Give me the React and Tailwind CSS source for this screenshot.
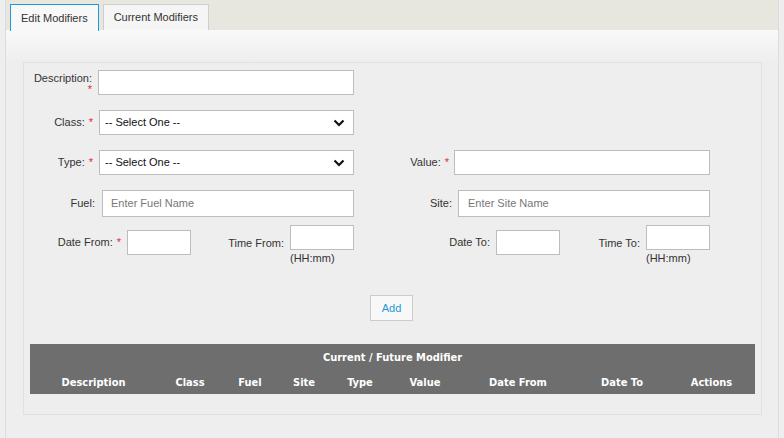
import React from "react";

const lbl = "text-[11px] text-[#333] leading-none";
const inp = "h-[25px] bg-white border border-[#bdbdbd]";

function Chevron() {
  return (
    <svg width="12" height="8" viewBox="0 0 12 8" className="absolute right-[8px] top-[8px]">
      <path d="M1.5 1.5 L6 6 L10.5 1.5" fill="none" stroke="#111" strokeWidth="2.2" />
    </svg>
  );
}

function Select({ className }) {
  return (
    <div className={`relative ${inp} ${className}`}>
      <span className="absolute left-[5px] top-[6px] text-[11px] text-[#111] leading-none">-- Select One --</span>
      <Chevron />
    </div>
  );
}

function Req() {
  return <span className="text-[#ec2330] ml-[4px]">*</span>;
}

export default function App() {
  const cols = [
    ["Description", "w-[127px]"],
    ["Class", "w-[66px]"],
    ["Fuel", "w-[54px]"],
    ["Site", "w-[54px]"],
    ["Type", "w-[58px]"],
    ["Value", "w-[72px]"],
    ["Date From", "w-[114px]"],
    ["Date To", "w-[94px]"],
    ["Actions", "w-[85px]"],
  ];
  return (
    <div className="w-[784px] h-[438px] bg-[#eeeeee] px-[5px] font-['Liberation_Sans',Arial,sans-serif] overflow-hidden">
      <div className="h-full border-x border-[#dcdcdc] bg-[#eeeeee] flex flex-col">
        {/* tab strip */}
        <div className="h-[30px] bg-[#e7e6df] flex items-end pl-[4px] gap-[4px] shrink-0">
          <div className="h-[27px] px-[10px] bg-[#f8f8f8] border border-b-0 border-[#1e9ad6] flex items-center text-[11px] text-[#333] relative top-[1px]">
            Edit Modifiers
          </div>
          <div className="h-[26px] px-[10px] bg-[#f5f5f5] border border-b-0 border-[#cfcfcf] flex items-center text-[11px] text-[#333]">
            Current Modifiers
          </div>
        </div>
        {/* panel */}
        <div className="flex-1 bg-[linear-gradient(to_bottom,#f9f9f9_0px,#eeeeee_32px)] pt-[32px] px-[17px]">
          <div className="w-[739px] h-[353px] border border-[#e2e2da] bg-[#eeeeee] pt-[7px]">
            {/* row 1 */}
            <div className="flex items-center h-[25px]">
              <div className={`${lbl} w-[68px] text-right pt-[1px]`}>
                <div className="leading-[12px]">Description:</div>
                <div className="text-[#ec2330] leading-[10px]">*</div>
              </div>
              <div className={`${inp} w-[256px] ml-[6px]`} />
            </div>
            {/* row 2 */}
            <div className="flex items-center h-[25px] mt-[15px]">
              <div className={`${lbl} w-[69px] text-right`}>
                Class:<Req />
              </div>
              <Select className="w-[255px] ml-[6px]" />
            </div>
            {/* row 3 */}
            <div className="flex items-center h-[25px] mt-[15px]">
              <div className={`${lbl} w-[69px] text-right`}>
                Type:<Req />
              </div>
              <Select className="w-[255px] ml-[6px]" />
              <div className={`${lbl} w-[95px] text-right`}>
                Value:<Req />
              </div>
              <div className={`${inp} w-[256px] ml-[5px]`} />
            </div>
            {/* row 4 */}
            <div className="flex items-center h-[27px] mt-[15px]">
              <div className={`${lbl} w-[71px] text-right`}>Fuel:</div>
              <div className="h-[27px] bg-white border border-[#bdbdbd] w-[252px] ml-[7px] flex items-center pl-[8px] text-[11px] text-[#777]">
                Enter Fuel Name
              </div>
              <div className={`${lbl} w-[98px] text-right`}>Site:</div>
              <div className="h-[27px] bg-white border border-[#bdbdbd] w-[252px] ml-[6px] flex items-center pl-[9px] text-[11px] text-[#777]">
                Enter Site Name
              </div>
            </div>
            {/* row 5 */}
            <div className="flex items-start mt-[8px] h-[40px]">
              <div className="flex items-center mt-[5px]">
                <div className={`${lbl} w-[97px] text-right`}>
                  Date From:<Req />
                </div>
                <div className={`${inp} w-[64px] ml-[6px]`} />
              </div>
              <div className="flex items-start">
                <div className={`${lbl} w-[93px] text-right mt-[13px]`}>Time From:</div>
                <div className="ml-[6px] flex flex-col">
                  <div className={`${inp} w-[64px]`} />
                  <div className="text-[11px] text-[#333] leading-none mt-[3px]">(HH:mm)</div>
                </div>
              </div>
              <div className="flex items-center mt-[5px]">
                <div className={`${lbl} w-[136px] text-right`}>Date To:</div>
                <div className={`${inp} w-[64px] ml-[6px]`} />
              </div>
              <div className="flex items-start">
                <div className={`${lbl} w-[80px] text-right mt-[13px]`}>Time To:</div>
                <div className="ml-[6px] flex flex-col">
                  <div className={`${inp} w-[64px]`} />
                  <div className="text-[11px] text-[#333] leading-none mt-[3px]">(HH:mm)</div>
                </div>
              </div>
            </div>
            {/* add */}
            <div className="flex justify-center mt-[30px] pr-[2px]">
              <div className="w-[43px] h-[26px] bg-[#f8f8f8] border border-[#cccccc] flex items-center justify-center text-[11px] text-[#1e9ad6]">
                Add
              </div>
            </div>
            {/* table */}
            <div className="mx-[6px] mt-[23px] h-[50px] bg-[#6e6e6e] text-white font-['DejaVu_Sans_Condensed','DejaVu_Sans',sans-serif] font-stretch-condensed font-bold text-[11px] leading-none">
              <div className="h-[26px] flex items-center justify-center pt-[1px]">Current / Future Modifier</div>
              <div className="h-[24px] flex items-start pt-[7px]">
                {cols.map(([c, w]) => (
                  <div key={c} className={`${w} text-center`}>{c}</div>
                ))}
              </div>
            </div>
          </div>
        </div>
      </div>
    </div>
  );
}
